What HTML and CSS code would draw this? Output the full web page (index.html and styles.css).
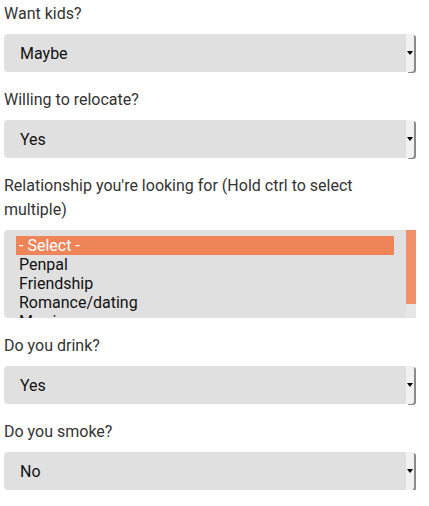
FILE: index.html
```html
<!DOCTYPE html>
<html>
<head>
<meta charset="utf-8">
<link rel="stylesheet" href="styles.css">
</head>
<body>
<form class="form">
  <div class="field">
    <div class="label">Want kids?</div>
    <div class="select"><span class="select-value">Maybe</span><span class="select-btn"><span class="arrow"></span></span></div>
  </div>
  <div class="field">
    <div class="label">Willing to relocate?</div>
    <div class="select"><span class="select-value">Yes</span><span class="select-btn"><span class="arrow"></span></span></div>
  </div>
  <div class="field">
    <div class="label">Relationship you're looking for (Hold ctrl to select multiple)</div>
    <div class="listbox">
      <div class="options">
        <div class="option selected">- Select -</div>
        <div class="option">Penpal</div>
        <div class="option">Friendship</div>
        <div class="option">Romance/dating</div>
        <div class="option">Marriage</div>
      </div>
      <div class="scrollbar"><div class="thumb"></div></div>
    </div>
  </div>
  <div class="field">
    <div class="label">Do you drink?</div>
    <div class="select"><span class="select-value">Yes</span><span class="select-btn"><span class="arrow"></span></span></div>
  </div>
  <div class="field">
    <div class="label">Do you smoke?</div>
    <div class="select"><span class="select-value">No</span><span class="select-btn"><span class="arrow"></span></span></div>
  </div>
</form>
</body>
</html>
```
FILE: styles.css
```css
html, body {
  margin: 0;
  padding: 0;
  background: #ffffff;
}
body {
  font-family: Roboto, "Liberation Sans", sans-serif;
}
.form {
  width: 412px;
  padding: 2px 0 0 4px;
  display: flex;
  flex-direction: column;
  gap: 16px;
}
.field {
  display: flex;
  flex-direction: column;
  gap: 8px;
}
.label {
  font-size: 16px;
  line-height: 24px;
  color: #333333;
  padding-right: 40px;
}
.select {
  height: 38px;
  width: 410px;
  display: flex;
  align-items: stretch;
  background: #e0e0e0;
  border-radius: 4px;
  box-sizing: border-box;
}
.select-value {
  flex: 1;
  display: flex;
  align-items: center;
  padding-left: 16px;
  font-size: 16px;
  color: #111;
}
.select-btn {
  width: 8px;
  background: #f1f1f1;
  border-radius: 0 3px 3px 0;
  box-shadow: 2px 1px 0 #8a8a8a;
  display: flex;
  align-items: center;
  justify-content: center;
}
.arrow {
  width: 0;
  height: 0;
  border-left: 3px solid transparent;
  border-right: 3px solid transparent;
  border-top: 4px solid #000;
}
.listbox {
  width: 412px;
  height: 88px;
  display: flex;
  background: #e0e0e0;
  border-radius: 4px 0 0 4px;
  overflow: hidden;
}
.options {
  flex: 1;
  padding: 6px 12px 0 12px;
  font-size: 16px;
  color: #111;
}
.option {
  height: 19px;
  line-height: 19px;
  padding-left: 3px;
}
.option.selected {
  background: #f08459;
  color: #ffffff;
}
.scrollbar {
  width: 10px;
  background: #e6e6e6;
  display: flex;
  flex-direction: column;
}
.thumb {
  height: 74px;
  background: #f0916a;
}
```
